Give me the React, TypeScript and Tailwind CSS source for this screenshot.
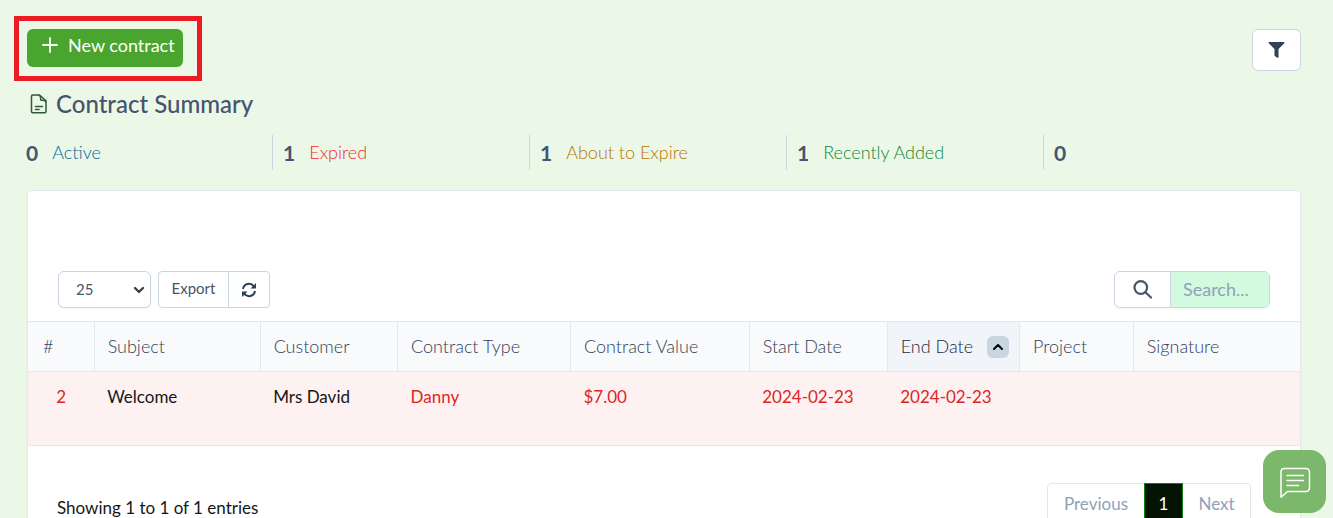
import React from "react";
import { FaFilter } from "react-icons/fa";
import { ChevronDown, ChevronUp } from "lucide-react";

interface SummaryItem {
    total: number;
    label: string;
    color: string;
}

interface Column {
    title: string;
    width: string;
    sorted?: boolean;
}

const summary: SummaryItem[] = [
    { total: 0, label: "Active", color: "text-[#0369a1]" },
    { total: 1, label: "Expired", color: "text-[#ef2b2b]" },
    { total: 1, label: "About to Expire", color: "text-[#b87503]" },
    { total: 1, label: "Recently Added", color: "text-[#0b8a3a]" },
    { total: 0, label: "", color: "" },
];

const columns: Column[] = [
    { title: "#", width: "w-[5.2%]" },
    { title: "Subject", width: "w-[13.05%]" },
    { title: "Customer", width: "w-[10.8%]" },
    { title: "Contract Type", width: "w-[13.6%]" },
    { title: "Contract Value", width: "w-[14.05%]" },
    { title: "Start Date", width: "w-[10.85%]" },
    { title: "End Date", width: "w-[10.4%]", sorted: true },
    { title: "Project", width: "w-[8.95%]" },
    { title: "Signature", width: "w-[13.1%]" },
];

const row = ["2", "Welcome", "Mrs David", "Danny", "$7.00", "2024-02-23", "2024-02-23", "", ""];

const PlusIcon: React.FC = () => (
    <svg className="h-4 w-4 shrink-0" viewBox="0 0 16 16" fill="none" stroke="currentColor" strokeWidth="1.8" strokeLinecap="round">
        <path d="M8 1v14M1 8h14" />
    </svg>
);

const SearchIcon: React.FC = () => (
    <svg className="h-5 w-5 text-slate-600" viewBox="0 0 20 20" fill="none" stroke="currentColor" strokeWidth="2.2" strokeLinecap="round">
        <circle cx="7.800" cy="7.500" r="6.300" />
        <path d="m12.500 12.200 5.500 5.300" />
    </svg>
);

const ReloadIcon: React.FC = () => (
    <svg className="h-4 w-4" viewBox="0 0 16 16" fill="none" stroke="currentColor" strokeWidth="2">
        <path d="M2 7a6 6 0 0 1 10.800-2.600M14 9a6 6 0 0 1-10.800 2.600" />
        <path d="M15 1v5.500H9.500ZM1 15V9.500h5.500Z" fill="currentColor" stroke="none" />
    </svg>
);

const FileIcon: React.FC = () => (
    <svg className="h-5 w-5" viewBox="0 0 20 20" fill="none" stroke="#2f5a3a" strokeWidth="1.5" strokeLinecap="round" strokeLinejoin="round">
        <path d="M4.800 1h6.700L18 6.700v10.800c0 .8-.5 1.300-1.300 1.300H4.800c-.8 0-1.300-.5-1.300-1.300V2.300C3.500 1.500 4 1 4.800 1Z" />
        <path d="M11 1.200c1.300.4 1.600 1.300 1.600 2.700v1.300c0 .7.4 1.100 1.100 1.100h1.400c1.500 0 2.400.5 2.700 1.700" />
        <path d="M7.500 12.500h7M7.500 15.500h3.500" />
    </svg>
);

const ChatIcon: React.FC = () => (
    <svg className="h-8 w-8" viewBox="0 0 32 32" fill="none" stroke="#fff" strokeWidth="1.5" strokeLinecap="round" strokeLinejoin="round">
        <path d="M5 2.500h22A3.500 3.500 0 0 1 30.500 6v16a3.500 3.500 0 0 1-3.500 3.500H8.500L2 31.200V6a3.500 3.500 0 0 1 3-3.500Z" />
        <path d="M8 9.500h16.500M8 14.500h16.500M8 19.500h11.500" />
    </svg>
);

const Summary: React.FC = () => (
    <section>
        <h4 className="flex items-center gap-2 pl-7 text-[24px] leading-8 font-medium text-slate-600">
            <FileIcon />
            Contract Summary
        </h4>
        <div className="mt-[15px] grid grid-cols-5 pl-4">
            {summary.map((item, index) => (
                <div key={index} className="flex h-[35px] items-center gap-3.5 border-r border-slate-300 pl-2.5 last:border-r-0">
                    <span className="text-[21px] font-bold text-slate-600">{item.total}</span>
                    {item.label && <a href="#" className={`text-[18px] font-light ${item.color}`}>{item.label}</a>}
                </div>
            ))}
        </div>
    </section>
);

const Toolbar: React.FC = () => (
    <div className="flex items-center justify-between px-[30px] pb-[13px]">
        <div className="flex gap-[7px]">
            <div className="relative">
                <select aria-label="Rows per page" defaultValue="25" className="h-[37px] w-[93px] appearance-none rounded-md border border-slate-300 bg-white pl-[17px] text-[15px] text-slate-600 shadow-xs">
                    <option>10</option>
                    <option>25</option>
                    <option>50</option>
                </select>
                <ChevronDown className="pointer-events-none absolute top-[11px] right-1 h-4 w-4 text-neutral-700" strokeWidth={3.5} />
            </div>
            <div className="flex">
                <button className="h-[37px] w-[71px] rounded-l border border-slate-300 pb-0.5 text-[15px] text-slate-600">Export</button>
                <button aria-label="Reload" className="-ml-px flex h-[37px] w-[42px] items-center justify-center rounded-r border border-slate-300 text-slate-700">
                    <ReloadIcon />
                </button>
            </div>
        </div>
        <div className="flex h-[37px] w-[156px] overflow-hidden rounded-md border border-slate-300 shadow-xs">
            <label htmlFor="search" className="flex w-14 shrink-0 items-center justify-center border-r border-slate-300">
                <SearchIcon />
            </label>
            <input id="search" type="search" placeholder="Search..." className="w-full min-w-0 bg-[#d1fadf] pl-3 text-[18px] outline-none placeholder:text-slate-400" />
        </div>
    </div>
);

const ContractsTable: React.FC = () => (
    <table className="w-full table-fixed border-collapse text-left">
        <thead>
            <tr className="h-[50px] border-y border-slate-200 bg-slate-50 text-[18px] text-slate-700">
                {columns.map((column) => (
                    <th
                        key={column.title}
                        className={`${column.width} border-r border-slate-200 p-0 pl-[13px] font-light whitespace-nowrap first:pl-[15px] last:border-r-0 ${column.sorted ? "bg-slate-100 text-slate-800" : ""}`}
                    >
                        {column.sorted ? (
                            <div className="flex items-center justify-between pr-2.5">
                                {column.title}
                                <button aria-label="Sort by end date" className="flex h-[22px] w-[22px] items-center justify-center rounded-md bg-slate-300">
                                    <ChevronUp className="h-4 w-4 text-black" strokeWidth={3} />
                                </button>
                            </div>
                        ) : (
                            column.title
                        )}
                    </th>
                ))}
            </tr>
        </thead>
        <tbody>
            <tr className="h-[74px] border-b border-slate-200 bg-[#fef1f1] text-[17px] text-[#dc2626]">
                {row.map((value, index) => (
                    <td key={index} className="p-0 pt-3 pl-[13px] align-top first:pl-0 first:text-center">
                        {index === 1 || index === 2 ? <a href="#" className="text-neutral-900">{value}</a> : value}
                    </td>
                ))}
            </tr>
        </tbody>
    </table>
);

const App: React.FC = () => {
    return (
        <div className="h-screen overflow-hidden bg-[#ebf7e7] font-['Lato',sans-serif]">
            <header className="flex items-start justify-between pt-4 pr-8 pl-3.5">
                {/* Highlighted action */}
                <div className="border-5 border-[#ed1c24] pt-2 pr-3.5 pb-[9px] pl-2">
                    <button className="flex h-[38px] w-[156px] items-center gap-2.5 rounded-md bg-[#4aa52e] pb-1.5 pl-[15px] text-[18px] whitespace-nowrap text-white">
                        <PlusIcon />
                        New contract
                    </button>
                </div>
                <button aria-label="Filter" className="mt-[13px] flex h-[42px] w-[49px] items-center justify-center rounded-md border border-slate-300 bg-white text-slate-700">
                    <FaFilter className="h-4 w-[17px]" />
                </button>
            </header>

            <main className="pt-[7px] pr-8">
                <Summary />
                <div className="mt-5 ml-[27px] rounded border border-slate-200 bg-white pt-20 shadow-xs">
                    <Toolbar />
                    <ContractsTable />
                    <div className="flex items-start justify-between pt-[37px] pr-[49px] pb-8 pl-[29px]">
                        <p className="pt-3 text-[17px] text-neutral-900">Showing 1 to 1 of 1 entries</p>
                        <nav aria-label="Pagination" className="flex h-[42px] rounded border border-slate-200 text-[17px] text-slate-400">
                            <a href="#" className="flex w-24 items-center justify-center">Previous</a>
                            <a href="#" className="-my-px flex w-[39px] items-center justify-center border border-[#0b840b] bg-[#041303] text-white">1</a>
                            <a href="#" className="flex w-[67px] items-center justify-center">Next</a>
                        </nav>
                    </div>
                </div>
            </main>

            <button aria-label="Open chat" className="fixed right-[7px] bottom-[5px] flex h-[63px] w-[63px] items-center justify-center rounded-2xl bg-[#7cb86b]">
                <ChatIcon />
            </button>
        </div>
    );
};

export default App;
